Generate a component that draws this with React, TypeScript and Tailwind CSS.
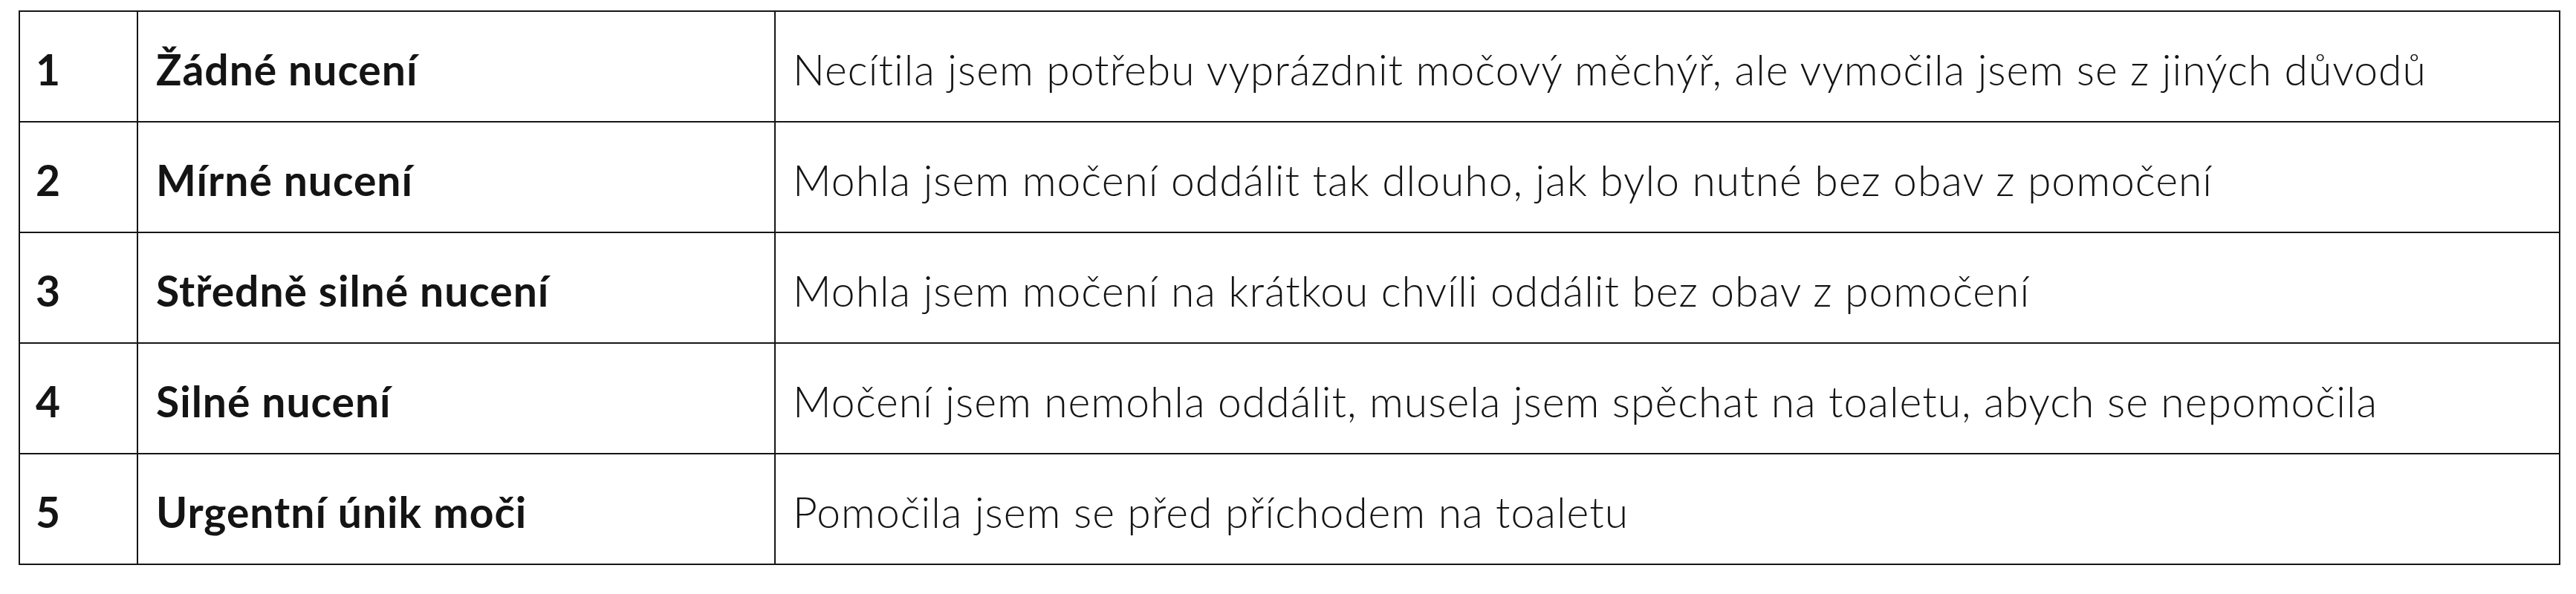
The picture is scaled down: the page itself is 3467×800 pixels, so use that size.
const rows = [
  {
    level: "1",
    name: "Žádné nucení",
    text: "Necítila jsem potřebu vyprázdnit močový měchýř, ale vymočila jsem se z jiných důvodů",
  },
  {
    level: "2",
    name: "Mírné nucení",
    text: "Mohla jsem močení oddálit tak dlouho, jak bylo nutné bez obav z pomočení",
  },
  {
    level: "3",
    name: "Středně silné nucení",
    text: "Mohla jsem močení na krátkou chvíli oddálit bez obav z pomočení",
  },
  {
    level: "4",
    name: "Silné nucení",
    text: "Močení jsem nemohla oddálit, musela jsem spěchat na toaletu, abych se nepomočila",
  },
  {
    level: "5",
    name: "Urgentní únik moči",
    text: "Pomočila jsem se před příchodem na toaletu",
  },
];

export default function App() {
  return (
    <div className="h-[800px] w-full bg-white pl-[25px] pt-[14px] font-['Lato','Open_Sans',sans-serif] text-[#141414]">
      <table className="w-[3421px] table-fixed border-collapse text-left text-[57px] leading-none">
        <colgroup>
          <col className="w-[159px]" />
          <col className="w-[858px]" />
          <col />
        </colgroup>
        <tbody>
          {rows.map((row) => (
            <tr key={row.level} className="h-[149px]">
              <td className="border-2 border-[#161616] pl-[21px] pt-[8px] align-middle font-bold">
                {row.level}
              </td>
              <td className="border-2 border-[#161616] pl-[24px] pt-[8px] align-middle font-bold tracking-[1px]">
                {row.name}
              </td>
              <td className="border-2 border-[#161616] pl-[23px] pt-[8px] align-middle font-light tracking-[1px]">
                {row.text}
              </td>
            </tr>
          ))}
        </tbody>
      </table>
    </div>
  );
}
